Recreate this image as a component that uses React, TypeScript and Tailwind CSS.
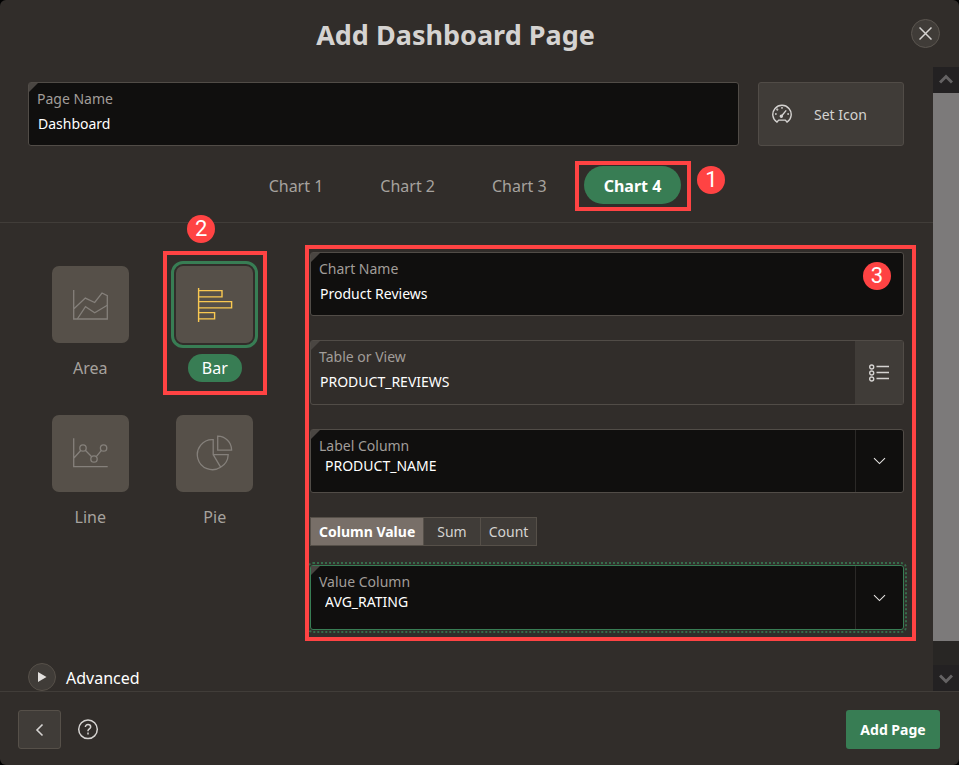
import type { ReactNode } from "react";

const icon = "block";

function AreaIcon() {
  return (
    <svg className={icon} width="37" height="37" viewBox="0 0 37 37" fill="none" stroke="currentColor" strokeWidth="1.3">
      <path d="M1.7 4v29h33.6V9.7L30 7l-7.3 9.5-9.4-4.4L1.7 23" />
      <path d="M5.3 33l8.2-12.3 9.2 6 12.6-7.4" />
    </svg>
  );
}

function BarIcon() {
  return (
    <svg className={icon} width="37" height="37" viewBox="0 0 37 37" fill="none" stroke="currentColor" strokeWidth="1.4">
      <path d="M2.6 2v34M2.6 4.6H26v6.3H2.6M2.6 15.6h33v6.3h-33M2.6 26.6h16v6.3h-16" />
    </svg>
  );
}

function LineIcon() {
  return (
    <svg className={icon} width="37" height="37" viewBox="0 0 37 37" fill="none" stroke="currentColor" strokeWidth="1.3">
      <path d="M1.7 3.3v28.4h34M1.7 23.2l7-7.7M13.3 15.3l6.4 6.4M24.3 21.7l5.1-6.4" />
      <circle cx="11" cy="13" r="3.2" />
      <circle cx="22" cy="24" r="3.2" />
      <circle cx="31.6" cy="13" r="3.2" />
    </svg>
  );
}

function PieIcon() {
  return (
    <svg className={icon} width="37" height="37" viewBox="0 0 37 37" fill="none" stroke="currentColor" strokeWidth="1.3">
      <path d="M17.2 4.7A15 15 0 1 0 24.6 32.2 15 15 0 0 0 32.2 19.7h-15zM17.2 19.7l7.4 12.5" />
      <path d="M21.7 1.2v13.9h13.9A13.9 13.9 0 0 0 21.7 1.2z" />
    </svg>
  );
}

function GaugeIcon() {
  return (
    <svg className={icon} width="20" height="20" viewBox="0 0 20 20" fill="none" stroke="currentColor" strokeWidth="1.4">
      <path d="M5 18.2A9.2 9.2 0 1 1 15 18.2l-1.6-2.1H6.6z" strokeLinejoin="round" />
      <path d="M9.4 12.2l4.8-5.8M10 3v1.7M3 10h1.7M15.3 10H17" />
      <circle cx="9.3" cy="12.2" r="1" fill="currentColor" />
      <circle cx="5.3" cy="5.6" r="0.4" fill="currentColor" />
    </svg>
  );
}

function ListIcon() {
  return (
    <svg className={icon} width="20" height="20" viewBox="0 0 20 20" fill="none" stroke="currentColor" strokeWidth="1.4">
      <circle cx="2.7" cy="4" r="2" />
      <circle cx="2.7" cy="10" r="2" />
      <circle cx="2.7" cy="16" r="2" />
      <path d="M7.5 3.5H20M7.5 9.5H20M7.5 15.5H20" />
    </svg>
  );
}

function ChevronDown() {
  return (
    <svg className={icon} width="15" height="14" viewBox="0 0 15 14" fill="none" stroke="currentColor" strokeWidth="1.1">
      <path d="M2 4.2l5.5 5.4L13 4.2" />
    </svg>
  );
}

function Badge({ children, className }: { children: ReactNode; className: string }) {
  return (
    <span
      className={`absolute z-10 flex size-7 items-center justify-center rounded-full bg-[#ff4343] font-[Roboto,sans-serif] text-[22px] leading-none text-white ${className}`}
    >
      {children}
    </span>
  );
}

function Highlight({ className }: { className: string }) {
  return <span aria-hidden className={`pointer-events-none absolute border-4 border-[#ff4343] ${className}`} />;
}

function FieldShell({ children, className }: { children: ReactNode; className: string }) {
  return (
    <div className={`relative flex rounded-[3px] border ${className}`}>
      <span aria-hidden className="absolute top-0 left-0 size-[9px] bg-[#4a4642] [clip-path:polygon(0_0,100%_0,0_100%)]" />
      {children}
    </div>
  );
}

const labelClass = "block text-sm leading-5 text-[#a19d99]";

function TextField({ id, label, value }: { id: string; label: string; value: string }) {
  return (
    <div className="min-w-0 flex-1 px-2 pt-[6px]">
      <label htmlFor={id} className={labelClass}>{label}</label>
      <input
        id={id}
        defaultValue={value}
        className="mt-1 block w-full bg-transparent px-px text-sm leading-[22px] text-white outline-none"
      />
    </div>
  );
}

function SelectField({ id, label, value, focused }: { id: string; label: string; value: string; focused?: boolean }) {
  return (
    <FieldShell
      className={
        focused
          ? "h-[65px] border-[#387d54] bg-[#100f0e] outline-2 outline-offset-1 outline-dotted outline-[#387d54]/80"
          : "h-16 border-[#514c47] bg-[#100f0e]"
      }
    >
      <div className="min-w-0 flex-1 px-2 pt-[6px]">
        <label htmlFor={id} className={labelClass}>{label}</label>
        <select
          id={id}
          defaultValue={value}
          className="block w-full appearance-none bg-transparent px-[6px] text-sm leading-5 text-white outline-none"
        >
          <option>{value}</option>
        </select>
      </div>
      <span aria-hidden className="flex w-12 items-center justify-center border-l border-[#2b2927] text-[#e6e4e2]">
        <ChevronDown />
      </span>
    </FieldShell>
  );
}

function ChartType({ label, selected, children }: { label: string; selected?: boolean; children: ReactNode }) {
  return (
    <button type="button" aria-pressed={!!selected} className="relative flex flex-col items-center gap-[11px]">
      <span
        className={`flex size-[77px] items-center justify-center rounded-[7px] bg-[#565049] ${
          selected
            ? "text-[#f9c851] outline-3 outline-offset-2 outline-[#387d54]"
            : "text-[#85807b]"
        }`}
      >
        {children}
      </span>
      <span
        className={`rounded-full px-[14px] text-base leading-7 ${selected ? "bg-[#387d54] text-white" : "text-[#a6a29e]"}`}
      >
        {label}
      </span>
      {selected && (
        <>
          <Highlight className="-top-[15px] -left-[13px] h-36 w-26" />
          <Badge className="-top-[51px] left-[11px]">2</Badge>
        </>
      )}
    </button>
  );
}

const tabClass = "h-[38px] rounded-full px-5 text-base leading-10";

export default function App() {
  return (
    <div className="h-screen bg-black font-['Noto_Sans',sans-serif]">
      <main className="flex h-full flex-col overflow-hidden rounded-md bg-[#312d2a] text-[#d5d3d1]">
        <header className="flex h-[67px] shrink-0 items-center pr-[19px]">
          <h1 className="flex-1 pt-0.5 text-center text-[27px] leading-9 font-bold">Add Dashboard Page</h1>
          <button
            type="button"
            aria-label="Close"
            className="flex size-[29px] items-center justify-center rounded-full border border-[#5b5650] bg-[#403c38]"
          >
            <svg width="13" height="13" viewBox="0 0 13 13" fill="none" stroke="currentColor" strokeWidth="1.5">
              <path d="M.5.5l12 12M12.5.5l-12 12" />
            </svg>
          </button>
        </header>

        <div className="flex min-h-0 flex-1">
          <div className="min-w-0 flex-1 overflow-hidden">
            <div className="flex gap-[19px] pt-[15px] pr-[29px] pl-7">
              <div className="flex-1">
                <FieldShell className="h-16 border-[#514c47] bg-[#100f0e]">
                  <TextField id="page-name" label="Page Name" value="Dashboard" />
                </FieldShell>
              </div>
              <button
                type="button"
                className="flex w-[146px] items-center rounded-[3px] border border-[#514c47] bg-[#403c38] pl-[13px] text-sm"
              >
                <GaugeIcon />
                <span className="ml-[22px] pt-0.5">Set Icon</span>
              </button>
            </div>

            <nav className="flex justify-center gap-[17px] border-b border-[#413d39] pt-5 pr-[3px] pb-[18px] text-[#a6a29e]">
              <button type="button" className={tabClass}>Chart 1</button>
              <button type="button" className={tabClass}>Chart 2</button>
              <button type="button" className={tabClass}>Chart 3</button>
              <div className="relative">
                <button type="button" className={`${tabClass} bg-[#387d54] font-bold text-white`}>Chart 4</button>
                <Highlight className="-top-[5px] -right-[10px] -bottom-[7px] -left-[9px]" />
                <Badge className="-right-11 bottom-[10px]">1</Badge>
              </div>
            </nav>

            <div className="flex gap-[33px] pt-[29px] pr-[29px] pl-7">
              <div className="grid w-[249px] shrink-0 grid-cols-2 content-start justify-items-center gap-y-[33px] pt-[14px]">
                <ChartType label="Area"><AreaIcon /></ChartType>
                <ChartType label="Bar" selected><BarIcon /></ChartType>
                <ChartType label="Line"><LineIcon /></ChartType>
                <ChartType label="Pie"><PieIcon /></ChartType>
              </div>

              <div className="relative flex min-w-0 flex-1 flex-col gap-6">
                <FieldShell className="h-16 border-[#514c47] bg-[#100f0e]">
                  <TextField id="chart-name" label="Chart Name" value="Product Reviews" />
                </FieldShell>
                <FieldShell className="h-[65px] border-[#514c47]">
                  <TextField id="table-name" label="Table or View" value="PRODUCT_REVIEWS" />
                  <button
                    type="button"
                    aria-label="Choose table"
                    className="flex w-12 items-center justify-center bg-[#403c38] text-[#d5d3d1]"
                  >
                    <ListIcon />
                  </button>
                </FieldShell>
                <SelectField id="label-column" label="Label Column" value="PRODUCT_NAME" />
                <div className="flex flex-col gap-[19px]">
                  <div className="flex self-start border border-[#565049] bg-[#403c38] text-sm leading-[27px]">
                    <button type="button" className="bg-[#786f68] px-2 font-bold text-white">Column Value</button>
                    <button type="button" className="border-l border-[#565049] px-[13px]">Sum</button>
                    <button type="button" className="border-l border-[#565049] px-2">Count</button>
                  </div>
                  <SelectField id="value-column" label="Value Column" value="AVG_RATING" focused />
                </div>
                <Highlight className="-top-[7px] -right-3 -bottom-[11px] -left-[5px]" />
                <Badge className="top-[10px] right-[13px]">3</Badge>
              </div>
            </div>

            <button type="button" className="mt-[33px] ml-7 flex items-center gap-[10px] text-base text-white">
              <span className="flex size-7 items-center justify-center rounded-full border border-[#565049] bg-[#403c38] text-[#e2e0de]">
                <svg width="10" height="10" viewBox="0 0 10 10" fill="currentColor">
                  <path d="M1 0l8.5 5L1 10z" />
                </svg>
              </span>
              <span className="pt-0.5">Advanced</span>
            </button>
          </div>

          <div aria-hidden className="flex w-[26px] shrink-0 flex-col bg-[#282624] text-[#646263]">
            <div className="flex h-[26px] items-center justify-center bg-[#232122]">
              <svg width="14" height="12" viewBox="0 0 14 12" fill="none" stroke="currentColor" strokeWidth="3">
                <path d="M1 8.5l6-6 6 6" />
              </svg>
            </div>
            <div className="flex-1 bg-[#7c7a7a]" />
            <div className="mt-6 flex h-[26px] items-center justify-center bg-[#232122]">
              <svg width="14" height="12" viewBox="0 0 14 12" fill="none" stroke="currentColor" strokeWidth="3">
                <path d="M1 3.5l6 6 6-6" />
              </svg>
            </div>
          </div>
        </div>

        <footer className="flex shrink-0 items-center border-t border-[#413d39] pt-[18px] pr-[19px] pb-4 pl-[18px]">
          <button
            type="button"
            aria-label="Back"
            className="flex h-[39px] w-[43px] items-center justify-center rounded-[3px] border border-[#565049] bg-[#403c38]"
          >
            <svg width="12" height="14" viewBox="0 0 12 14" fill="none" stroke="currentColor" strokeWidth="1.6">
              <path d="M8.5 1.5L3 7l5.5 5.5" />
            </svg>
          </button>
          <button type="button" aria-label="Help" className="ml-4">
            <svg width="22" height="22" viewBox="0 0 22 22" fill="none" stroke="currentColor" strokeWidth="1.5">
              <circle cx="11" cy="10.3" r="9.3" />
              <path d="M8.4 8.1c0-1.6 1.1-2.5 2.6-2.5s2.7.9 2.7 2.3c0 1.9-2.7 2-2.7 3.9v.4" />
              <path d="M11 13.6v1.8" />
            </svg>
          </button>
          <button
            type="button"
            className="ml-auto h-[39px] w-[94px] rounded-[3px] bg-[#387d54] text-sm font-bold text-white"
          >
            Add Page
          </button>
        </footer>
      </main>
    </div>
  );
}
